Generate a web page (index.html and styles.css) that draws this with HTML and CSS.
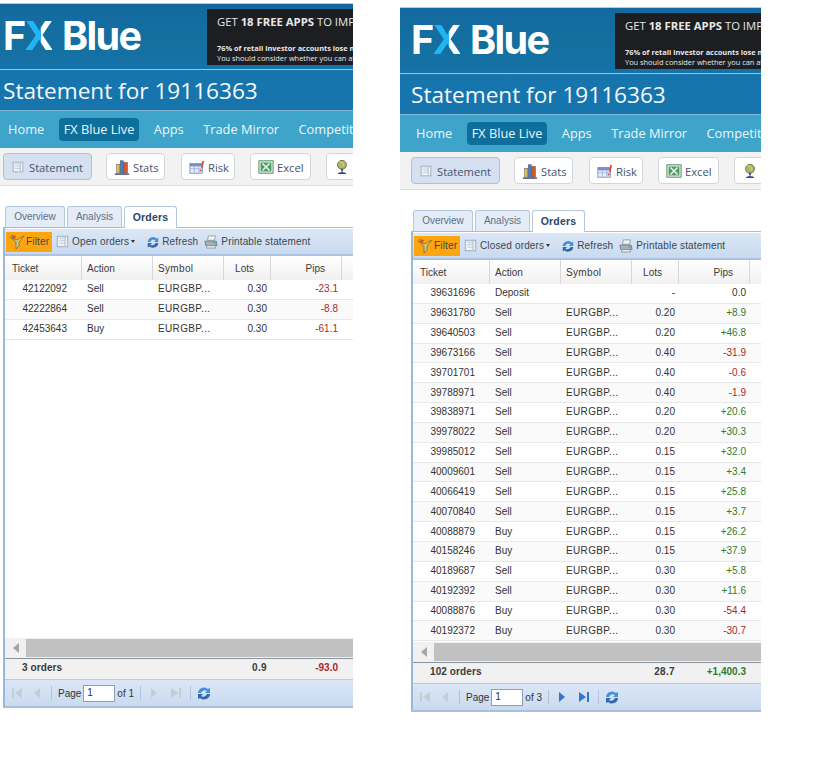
FILE: index.html
```html
<!DOCTYPE html>
<html lang="en">
<head>
<meta charset="utf-8">
<title>FX Blue statements</title>
<link rel="stylesheet" href="styles.css">
</head>
<body>
<div class="shots">
<section class="shot shot-a">
  <div class="inner">
  <header class="brand">
    <div class="logo">F<span class="x">X</span> Blue</div>
    <div class="ad"><p class="ad1">GET <b>18 FREE APPS</b> TO IMPROVE YOUR TRADING</p><p class="ad2"><b>76% of retail investor accounts lose money</b><br>You should consider whether you can afford</p></div>
  </header>
  <h1 class="title">Statement for 19116363</h1>
  <nav class="nav"><a>Home</a><a class="on">FX Blue Live</a><a>Apps</a><a>Trade Mirror</a><a>Competitions</a></nav>
  <div class="tools">
    <a class="btn on"><svg class="ic sm" viewBox="0 0 16 16"><rect x="1.5" y="1.5" width="13" height="13" fill="#eef2f6" stroke="#8fa0b2"/><path d="M4 4h8M4 7h8M4 10h8" stroke="#b8c4d0"/><path d="M11 2v12" stroke="#c4ced8" stroke-width="2"/></svg>Statement</a>
    <a class="btn b2"><svg class="ic" viewBox="0 0 18 18"><path d="M1 17h16" stroke="#33507a" stroke-width="1.5"/><rect x="3" y="6" width="3.5" height="10" fill="#e6c24a" stroke="#5c5a70" stroke-width=".6"/><rect x="7" y="2" width="3.5" height="14" fill="#4f7cc0" stroke="#3a5478" stroke-width=".6"/><rect x="11" y="4" width="4" height="12" fill="#d05a30" stroke="#6a4030" stroke-width=".6"/></svg>Stats</a>
    <a class="btn b3"><svg class="ic" viewBox="0 0 18 18"><rect x="1" y="5" width="14" height="11" fill="#e8eef8" stroke="#7a8fc0"/><path d="M1 8h14M1 11h14M6 5v11M11 5v11" stroke="#9fb2d8"/><rect x="1" y="5" width="14" height="3" fill="#7c8ed0"/><path d="M15 2l2 .5-2 8-1.6-.6z" fill="#e04a2a"/><circle cx="13" cy="13" r="1.2" fill="#e04a2a"/></svg>Risk</a>
    <a class="btn b4"><svg class="ic" viewBox="0 0 18 18"><rect x="1" y="2" width="16" height="14" fill="#dcecdc" stroke="#4d8a58"/><rect x="3" y="4" width="12" height="10" fill="#4f9a64"/><path d="M5 5l8 8M13 5l-8 8" stroke="#eaf6ea" stroke-width="1.8"/></svg>Excel</a>
    <a class="btn b5"><svg class="ic" viewBox="0 0 18 18"><circle cx="9" cy="6.5" r="5" fill="#b0b868" stroke="#5c6a3a"/><path d="M6 3c3 0 5 2 5 5" stroke="#e8d880" fill="none"/><path d="M9 11v3" stroke="#2c4a9c" stroke-width="2"/><path d="M4 17c1-3 9-3 10 0z" fill="#2c4a9c"/></svg></a>
  </div>
  <div class="gap"></div>
  <div class="tabs"><a class="tab">Overview</a><a class="tab">Analysis</a><a class="tab on">Orders</a></div>
  <div class="panel">
    <div class="bar">
      <a class="filter"><svg class="ic" viewBox="0 0 16 16"><path d="M1 3l6 5v7l3-3V8l5-6-4 2-3 2z" fill="#d8c67a" stroke="#7a6c30" stroke-width=".8"/><path d="M2 1l5 1-2 4z" fill="#c9572a"/></svg>Filter</a>
      <a class="bar-item i1"><svg class="ic" viewBox="0 0 16 16"><rect x="1.5" y="1.5" width="13" height="13" fill="#eef2f6" stroke="#8fa0b2"/><path d="M4 4h8M4 7h8M4 10h8" stroke="#b8c4d0"/><path d="M11 2v12" stroke="#c4ced8" stroke-width="2"/></svg>Open orders <span class="caret"></span></a>
      <a class="bar-item i2"><svg class="ic" viewBox="0 0 16 16"><path d="M2 8a6 6 0 0 1 10-4l2-1v5h-5l2-2a4 4 0 0 0-6 2z" fill="#4a90d0"/><path d="M14 9a6 6 0 0 1-10 4l-2 1V9h5l-2 2a4 4 0 0 0 6-2z" fill="#2f68ac"/></svg>Refresh</a>
      <a class="bar-item i3"><svg class="ic" viewBox="0 0 16 16"><path d="M5 1h8l-1 5H4z" fill="#f2f4f6" stroke="#7c8894" stroke-width=".8"/><path d="M1 7h13l1 5H2z" fill="#a8b0b8" stroke="#5e6a74" stroke-width=".8"/><path d="M3 12h10v3H3z" fill="#dfe4e8" stroke="#7c8894" stroke-width=".8"/><circle cx="12" cy="9" r="1" fill="#48b050"/></svg>Printable statement</a>
    </div>
    <div class="grid">
      <div class="row head"><span class="lt">Ticket</span><span class="lt">Action</span><span class="lt">Symbol</span><span class="rh">Lots</span><span class="rh">Pips</span><span></span></div>
      <div class="rows">
      <div class="row"><span class="tk">42122092</span><span>Sell</span><span>EURGBP...</span><span class="num">0.30</span><span class="num neg">-23.1</span><span></span></div>
      <div class="row"><span class="tk">42222864</span><span>Sell</span><span>EURGBP...</span><span class="num">0.30</span><span class="num neg">-8.8</span><span></span></div>
      <div class="row"><span class="tk">42453643</span><span>Buy</span><span>EURGBP...</span><span class="num">0.30</span><span class="num neg">-61.1</span><span></span></div>
      </div>
      <div class="scroll"><span class="arrow"></span><span class="thumb"></span></div>
      <div class="row sum"><span class="tk wide">3 orders</span><span></span><span class="num">0.9</span><span class="num neg">-93.0</span><span></span></div>
    </div>
    <div class="pager">
      <svg class="pg" viewBox="0 0 12 14"><path d="M1 2h2v10H1z M11 2v10L4 7z" fill="#c4ccd4"/></svg>
      <svg class="pg" viewBox="0 0 12 14"><path d="M9 2v10L3 7z" fill="#c4ccd4"/></svg>
      <i class="sep"></i><span class="pgt">Page</span><span class="inp">1</span><span class="pgt">of 1</span><i class="sep"></i>
      <svg class="pg" viewBox="0 0 12 14"><path d="M3 2v10l6-5z" fill="#c4ccd4"/></svg>
      <svg class="pg" viewBox="0 0 12 14"><path d="M11 2h-2v10h2z M1 2v10l7-5z" fill="#c4ccd4"/></svg>
      <i class="sep"></i>
      <svg class="ic" viewBox="0 0 16 16"><path d="M2 8a6 6 0 0 1 10-4l2-1v5h-5l2-2a4 4 0 0 0-6 2z" fill="#4a90d0"/><path d="M14 9a6 6 0 0 1-10 4l-2 1V9h5l-2 2a4 4 0 0 0 6-2z" fill="#2f68ac"/></svg>
    </div>
  </div>
  </div>
</section>

<section class="shot shot-b">
  <div class="inner">
  <header class="brand">
    <div class="logo">F<span class="x">X</span> Blue</div>
    <div class="ad"><p class="ad1">GET <b>18 FREE APPS</b> TO IMPROVE YOUR TRADING</p><p class="ad2"><b>76% of retail investor accounts lose money</b><br>You should consider whether you can afford</p></div>
  </header>
  <h1 class="title">Statement for 19116363</h1>
  <nav class="nav"><a>Home</a><a class="on">FX Blue Live</a><a>Apps</a><a>Trade Mirror</a><a>Competitions</a></nav>
  <div class="tools">
    <a class="btn on"><svg class="ic sm" viewBox="0 0 16 16"><rect x="1.5" y="1.5" width="13" height="13" fill="#eef2f6" stroke="#8fa0b2"/><path d="M4 4h8M4 7h8M4 10h8" stroke="#b8c4d0"/><path d="M11 2v12" stroke="#c4ced8" stroke-width="2"/></svg>Statement</a>
    <a class="btn b2"><svg class="ic" viewBox="0 0 18 18"><path d="M1 17h16" stroke="#33507a" stroke-width="1.5"/><rect x="3" y="6" width="3.5" height="10" fill="#e6c24a" stroke="#5c5a70" stroke-width=".6"/><rect x="7" y="2" width="3.5" height="14" fill="#4f7cc0" stroke="#3a5478" stroke-width=".6"/><rect x="11" y="4" width="4" height="12" fill="#d05a30" stroke="#6a4030" stroke-width=".6"/></svg>Stats</a>
    <a class="btn b3"><svg class="ic" viewBox="0 0 18 18"><rect x="1" y="5" width="14" height="11" fill="#e8eef8" stroke="#7a8fc0"/><path d="M1 8h14M1 11h14M6 5v11M11 5v11" stroke="#9fb2d8"/><rect x="1" y="5" width="14" height="3" fill="#7c8ed0"/><path d="M15 2l2 .5-2 8-1.6-.6z" fill="#e04a2a"/><circle cx="13" cy="13" r="1.2" fill="#e04a2a"/></svg>Risk</a>
    <a class="btn b4"><svg class="ic" viewBox="0 0 18 18"><rect x="1" y="2" width="16" height="14" fill="#dcecdc" stroke="#4d8a58"/><rect x="3" y="4" width="12" height="10" fill="#4f9a64"/><path d="M5 5l8 8M13 5l-8 8" stroke="#eaf6ea" stroke-width="1.8"/></svg>Excel</a>
    <a class="btn b5"><svg class="ic" viewBox="0 0 18 18"><circle cx="9" cy="6.5" r="5" fill="#b0b868" stroke="#5c6a3a"/><path d="M6 3c3 0 5 2 5 5" stroke="#e8d880" fill="none"/><path d="M9 11v3" stroke="#2c4a9c" stroke-width="2"/><path d="M4 17c1-3 9-3 10 0z" fill="#2c4a9c"/></svg></a>
  </div>
  <div class="gap"></div>
  <div class="tabs"><a class="tab">Overview</a><a class="tab">Analysis</a><a class="tab on">Orders</a></div>
  <div class="panel">
    <div class="bar">
      <a class="filter"><svg class="ic" viewBox="0 0 16 16"><path d="M1 3l6 5v7l3-3V8l5-6-4 2-3 2z" fill="#d8c67a" stroke="#7a6c30" stroke-width=".8"/><path d="M2 1l5 1-2 4z" fill="#c9572a"/></svg>Filter</a>
      <a class="bar-item i1"><svg class="ic" viewBox="0 0 16 16"><rect x="1.5" y="1.5" width="13" height="13" fill="#eef2f6" stroke="#8fa0b2"/><path d="M4 4h8M4 7h8M4 10h8" stroke="#b8c4d0"/><path d="M11 2v12" stroke="#c4ced8" stroke-width="2"/></svg>Closed orders <span class="caret"></span></a>
      <a class="bar-item i2"><svg class="ic" viewBox="0 0 16 16"><path d="M2 8a6 6 0 0 1 10-4l2-1v5h-5l2-2a4 4 0 0 0-6 2z" fill="#4a90d0"/><path d="M14 9a6 6 0 0 1-10 4l-2 1V9h5l-2 2a4 4 0 0 0 6-2z" fill="#2f68ac"/></svg>Refresh</a>
      <a class="bar-item i3"><svg class="ic" viewBox="0 0 16 16"><path d="M5 1h8l-1 5H4z" fill="#f2f4f6" stroke="#7c8894" stroke-width=".8"/><path d="M1 7h13l1 5H2z" fill="#a8b0b8" stroke="#5e6a74" stroke-width=".8"/><path d="M3 12h10v3H3z" fill="#dfe4e8" stroke="#7c8894" stroke-width=".8"/><circle cx="12" cy="9" r="1" fill="#48b050"/></svg>Printable statement</a>
    </div>
    <div class="grid">
      <div class="row head"><span class="lt">Ticket</span><span class="lt">Action</span><span class="lt">Symbol</span><span class="rh">Lots</span><span class="rh">Pips</span><span></span></div>
      <div class="rows">
      <div class="row"><span class="tk">39631696</span><span>Deposit</span><span></span><span class="num">-</span><span class="num">0.0</span><span></span></div>
      <div class="row"><span class="tk">39631780</span><span>Sell</span><span>EURGBP...</span><span class="num">0.20</span><span class="num pos">+8.9</span><span></span></div>
      <div class="row"><span class="tk">39640503</span><span>Sell</span><span>EURGBP...</span><span class="num">0.20</span><span class="num pos">+46.8</span><span></span></div>
      <div class="row"><span class="tk">39673166</span><span>Sell</span><span>EURGBP...</span><span class="num">0.40</span><span class="num neg">-31.9</span><span></span></div>
      <div class="row"><span class="tk">39701701</span><span>Sell</span><span>EURGBP...</span><span class="num">0.40</span><span class="num neg">-0.6</span><span></span></div>
      <div class="row"><span class="tk">39788971</span><span>Sell</span><span>EURGBP...</span><span class="num">0.40</span><span class="num neg">-1.9</span><span></span></div>
      <div class="row"><span class="tk">39838971</span><span>Sell</span><span>EURGBP...</span><span class="num">0.20</span><span class="num pos">+20.6</span><span></span></div>
      <div class="row"><span class="tk">39978022</span><span>Sell</span><span>EURGBP...</span><span class="num">0.20</span><span class="num pos">+30.3</span><span></span></div>
      <div class="row"><span class="tk">39985012</span><span>Sell</span><span>EURGBP...</span><span class="num">0.15</span><span class="num pos">+32.0</span><span></span></div>
      <div class="row"><span class="tk">40009601</span><span>Sell</span><span>EURGBP...</span><span class="num">0.15</span><span class="num pos">+3.4</span><span></span></div>
      <div class="row"><span class="tk">40066419</span><span>Sell</span><span>EURGBP...</span><span class="num">0.15</span><span class="num pos">+25.8</span><span></span></div>
      <div class="row"><span class="tk">40070840</span><span>Sell</span><span>EURGBP...</span><span class="num">0.15</span><span class="num pos">+3.7</span><span></span></div>
      <div class="row"><span class="tk">40088879</span><span>Buy</span><span>EURGBP...</span><span class="num">0.15</span><span class="num pos">+26.2</span><span></span></div>
      <div class="row"><span class="tk">40158246</span><span>Buy</span><span>EURGBP...</span><span class="num">0.15</span><span class="num pos">+37.9</span><span></span></div>
      <div class="row"><span class="tk">40189687</span><span>Sell</span><span>EURGBP...</span><span class="num">0.30</span><span class="num pos">+5.8</span><span></span></div>
      <div class="row"><span class="tk">40192392</span><span>Sell</span><span>EURGBP...</span><span class="num">0.30</span><span class="num pos">+11.6</span><span></span></div>
      <div class="row"><span class="tk">40088876</span><span>Buy</span><span>EURGBP...</span><span class="num">0.30</span><span class="num neg">-54.4</span><span></span></div>
      <div class="row"><span class="tk">40192372</span><span>Buy</span><span>EURGBP...</span><span class="num">0.30</span><span class="num neg">-30.7</span><span></span></div>
      </div>
      <div class="scroll"><span class="arrow"></span><span class="thumb"></span></div>
      <div class="row sum"><span class="tk wide">102 orders</span><span></span><span class="num">28.7</span><span class="num pos">+1,400.3</span><span></span></div>
    </div>
    <div class="pager">
      <svg class="pg" viewBox="0 0 12 14"><path d="M1 2h2v10H1z M11 2v10L4 7z" fill="#c4ccd4"/></svg>
      <svg class="pg" viewBox="0 0 12 14"><path d="M9 2v10L3 7z" fill="#c4ccd4"/></svg>
      <i class="sep"></i><span class="pgt">Page</span><span class="inp">1</span><span class="pgt">of 3</span><i class="sep"></i>
      <svg class="pg" viewBox="0 0 12 14"><path d="M3 2v10l6-5z" fill="#2f78c4"/></svg>
      <svg class="pg" viewBox="0 0 12 14"><path d="M11 2h-2v10h2z M1 2v10l7-5z" fill="#2f78c4"/></svg>
      <i class="sep"></i>
      <svg class="ic" viewBox="0 0 16 16"><path d="M2 8a6 6 0 0 1 10-4l2-1v5h-5l2-2a4 4 0 0 0-6 2z" fill="#4a90d0"/><path d="M14 9a6 6 0 0 1-10 4l-2 1V9h5l-2 2a4 4 0 0 0 6-2z" fill="#2f68ac"/></svg>
    </div>
  </div>
  </div>
</section>
</div>
</body>
</html>
```
FILE: styles.css
```css
* { box-sizing: border-box; }
html, body { margin: 0; padding: 0; background: #fff; }
body { width: 820px; height: 780px; overflow: hidden; font-family: "Open Sans", sans-serif; }
.shots { display: flex; align-items: flex-start; }
.shot { overflow: hidden; border-top: 1px solid #b9cbd6; }
.shot-a { width: 353px; margin-top: 3px; }
.shot-a .inner { width: 361px; margin-left: -8px; }
.shot-b { width: 361px; margin-top: 7px; margin-left: 47px; }
.inner { width: 361px; }

.brand { height: 66px; background: linear-gradient(#13699f, #14709f 60%, #1672a8); display: flex; padding-left: 11px; border-bottom: 1px solid #9cc4da; }
.logo { font-family: "Inter", "Liberation Sans", sans-serif; font-weight: 700; font-size: 39.5px; line-height: 1; letter-spacing: -1.6px; word-spacing: 2px; color: #fff; width: 204px; padding-top: 13px; white-space: nowrap; flex: none; }
.logo .x { color: transparent; background: linear-gradient(90deg, #22b4f4 58%, #fff 58%); -webkit-background-clip: text; background-clip: text; }
.ad { width: 146px; height: 56px; margin-top: 5px; background: #1c1e22; color: #e8e8e8; overflow: hidden; padding: 5px 0 0 10px; white-space: nowrap; flex: none; }
.ad p { margin: 0; }
.ad1 { font-size: 11.3px; line-height: 16px; }
.ad .ad2 { font-size: 7.4px; line-height: 10px; margin-top: 13px; }

.title { margin: 0; height: 41px; background: #1775ad; color: #f4fafd; font-size: 22.6px; font-weight: 400; line-height: 41px; padding-left: 11px; white-space: nowrap; border-bottom: 1px solid #7fb8d6; }
.nav { height: 37px; background: #3fa4c9; display: flex; align-items: center; padding-left: 11px; gap: 9.5px; white-space: nowrap; color: #eaf6fb; font-size: 12.8px; }
.nav a { padding: 0 5px; height: 23px; line-height: 23px; border-radius: 4px; }
.nav a.on { background: #0e6f9c; }
.tools { height: 38px; background: #f2f2f2; border-bottom: 1px solid #dcdcdc; display: flex; align-items: center; padding-left: 11px; white-space: nowrap; font-size: 11.2px; color: #44546e; }
.btn { display: flex; align-items: center; gap: 3px; height: 27px; background: #fff; border: 1px solid #d2d6da; border-radius: 4px; padding: 1px 7px 0; flex: none; }
.btn.on { background: #d5e1f0; border-color: #a9c3dc; width: 89px; gap: 5px; padding-left: 8px; }
.b2 { margin-left: 14px; width: 59px; }
.b3 { margin-left: 16px; width: 54px; }
.b4 { margin-left: 15px; width: 61px; }
.b5 { margin-left: 15px; width: 40px; }
.ic { width: 16px; height: 16px; flex: none; }
.ic.sm { width: 12px; height: 12px; }
.gap { height: 20px; }

.tabs { display: flex; padding-left: 5px; gap: 2px; height: 21px; font-family: "Liberation Sans", sans-serif; font-size: 10px; margin-left: 8px; }
.tab { width: 60px; height: 21px; background: #e4edf7; border: 1px solid #b0c8e0; border-bottom: 0; border-radius: 3px 3px 0 0; color: #5a7085; text-align: center; line-height: 20px; flex: none; }
.tab:nth-child(2) { width: 55px; }
.tab.on { width: 53px; background: #fff; color: #2a4468; font-weight: 700; font-size: 10.5px; letter-spacing: .2px; height: 22px; position: relative; z-index: 1; }
.panel { margin-left: 11px; border-left: 2px solid #9ab8d8; border-top: 1px solid #a3bfdc; border-bottom: 2px solid #a8c0d8; font-family: "Liberation Sans", sans-serif; font-size: 10px; color: #333; overflow: hidden; }

.bar { height: 28px; background: linear-gradient(#dbe7f6, #c9daf0); border-bottom: 2px solid #a9c4e2; border-top: 1px solid #fff; display: flex; align-items: center; padding-left: 1px; white-space: nowrap; color: #3c4650; letter-spacing: .15px; }
.filter { display: flex; align-items: center; gap: 1px; background: #fda50f; height: 20px; width: 46px; padding-left: 3px; flex: none; }
.bar-item { display: flex; align-items: center; flex: none; }
.bar-item .ic { width: 14px; height: 14px; }
.i1 { margin-left: 4px; gap: 3px; }
.i1 .ic { width: 13px; height: 13px; }
.i2 { margin-left: 11px; gap: 2px; }
.i3 { margin-left: 6px; gap: 3px; }
.caret { display: inline-block; width: 0; height: 0; border: 2.5px solid transparent; border-top: 3px solid #333; border-bottom: 0; margin-left: -1px; }

.grid { width: 359px; background: #fff; }
.row { display: grid; grid-template-columns: 77px 71px 71px 47px 71px 1fr; align-items: center; height: 19.85px; border-bottom: 1px solid #e8e8e8; white-space: nowrap; line-height: 1; }
.rows .row:nth-child(even) { background: #fafafa; }
.row > span { padding-left: 5px; }
.row > span:nth-child(3) { letter-spacing: .35px; }
.head { height: 24px; background: linear-gradient(#fff, #f0f0f0); border-bottom: 0; color: #3a3a3a; }
.head > span { height: 24px; line-height: 25px; border-right: 1px solid #d8d8d8; }
.head > .lt:first-child { padding-left: 7px; }
.row > .rh { text-align: right; padding: 0 16px 0 0; }
.row > .tk { text-align: right; padding: 0 15px 0 0; }
.row > .num { text-align: right; padding: 0 4px 0 0; letter-spacing: 0; }
.neg { color: #a82828; }
.pos { color: #2d7d2d; }
.rows { height: 358px; overflow: hidden; }
.scroll { height: 20px; background: #f1f1f1; display: flex; align-items: center; }
.arrow { width: 0; height: 0; border: 5px solid transparent; border-left: 0; border-right: 6px solid #a6a6a6; margin: 0 7px 0 8px; flex: none; }
.thumb { flex: 1; height: 18px; background: #c1c1c1; }
.sum { height: 22px; padding-bottom: 2px; background: #f1f1f1; border-top: 1px solid #8a949c; border-bottom: 1px solid #c0cad4; font-weight: 700; color: #3a3a3a; grid-template-columns: 148px 71px 47px 71px 1fr; letter-spacing: .1px; }
.row > .wide { text-align: left; padding: 0 0 0 17px; }
.sum > span:nth-child(2) { padding: 0; letter-spacing: 0; }
.pager { height: 26px; background: linear-gradient(#dbe7f6, #c9daf0); display: flex; align-items: center; padding-left: 6px; color: #333; font-size: 10px; white-space: nowrap; }
.pg { width: 12px; height: 14px; margin-right: 8px; flex: none; }
.sep ~ .pg { margin-right: 10px; }
.sep { width: 1px; height: 14px; background: #b0c4dc; margin: 0 5px 0 0; flex: none; }
.sep ~ .pg + .sep { margin-left: -2px; }
.pgt { margin: 0 2px 0 1px; }
.pgt + .sep { margin: 0 7px 0 4px; }
.inp { width: 32px; height: 17px; background: #fff; border: 1px solid #8aa0b8; line-height: 14px; padding-left: 3px; margin-right: 1px; font-size: 10px; }
```
